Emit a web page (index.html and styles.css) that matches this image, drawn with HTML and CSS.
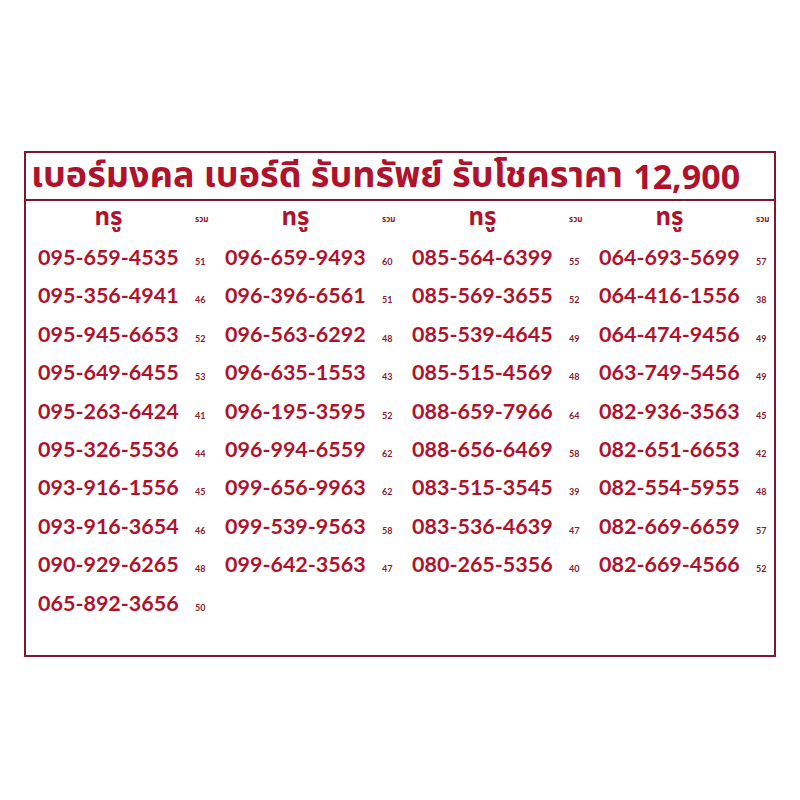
FILE: index.html
```html
<!DOCTYPE html>
<html lang="th">
<head>
<meta charset="utf-8">
<title>เบอร์มงคล</title>
<link rel="stylesheet" href="styles.css">
</head>
<body>
<div class="board">
  <div class="title">เบอร์มงคล เบอร์ดี รับทรัพย์ รับโชคราคา <span class="price">12,900</span></div>
  <div class="cols">
    <div class="col">
      <div class="head"><span class="net">ทรู</span><span class="sumlabel">รวม</span></div>
      <div class="row"><span class="num">095-659-4535</span><span class="sum">51</span></div>
      <div class="row"><span class="num">095-356-4941</span><span class="sum">46</span></div>
      <div class="row"><span class="num">095-945-6653</span><span class="sum">52</span></div>
      <div class="row"><span class="num">095-649-6455</span><span class="sum">53</span></div>
      <div class="row"><span class="num">095-263-6424</span><span class="sum">41</span></div>
      <div class="row"><span class="num">095-326-5536</span><span class="sum">44</span></div>
      <div class="row"><span class="num">093-916-1556</span><span class="sum">45</span></div>
      <div class="row"><span class="num">093-916-3654</span><span class="sum">46</span></div>
      <div class="row"><span class="num">090-929-6265</span><span class="sum">48</span></div>
      <div class="row"><span class="num">065-892-3656</span><span class="sum">50</span></div>
    </div>
    <div class="col">
      <div class="head"><span class="net">ทรู</span><span class="sumlabel">รวม</span></div>
      <div class="row"><span class="num">096-659-9493</span><span class="sum">60</span></div>
      <div class="row"><span class="num">096-396-6561</span><span class="sum">51</span></div>
      <div class="row"><span class="num">096-563-6292</span><span class="sum">48</span></div>
      <div class="row"><span class="num">096-635-1553</span><span class="sum">43</span></div>
      <div class="row"><span class="num">096-195-3595</span><span class="sum">52</span></div>
      <div class="row"><span class="num">096-994-6559</span><span class="sum">62</span></div>
      <div class="row"><span class="num">099-656-9963</span><span class="sum">62</span></div>
      <div class="row"><span class="num">099-539-9563</span><span class="sum">58</span></div>
      <div class="row"><span class="num">099-642-3563</span><span class="sum">47</span></div>
    </div>
    <div class="col">
      <div class="head"><span class="net">ทรู</span><span class="sumlabel">รวม</span></div>
      <div class="row"><span class="num">085-564-6399</span><span class="sum">55</span></div>
      <div class="row"><span class="num">085-569-3655</span><span class="sum">52</span></div>
      <div class="row"><span class="num">085-539-4645</span><span class="sum">49</span></div>
      <div class="row"><span class="num">085-515-4569</span><span class="sum">48</span></div>
      <div class="row"><span class="num">088-659-7966</span><span class="sum">64</span></div>
      <div class="row"><span class="num">088-656-6469</span><span class="sum">58</span></div>
      <div class="row"><span class="num">083-515-3545</span><span class="sum">39</span></div>
      <div class="row"><span class="num">083-536-4639</span><span class="sum">47</span></div>
      <div class="row"><span class="num">080-265-5356</span><span class="sum">40</span></div>
    </div>
    <div class="col">
      <div class="head"><span class="net">ทรู</span><span class="sumlabel">รวม</span></div>
      <div class="row"><span class="num">064-693-5699</span><span class="sum">57</span></div>
      <div class="row"><span class="num">064-416-1556</span><span class="sum">38</span></div>
      <div class="row"><span class="num">064-474-9456</span><span class="sum">49</span></div>
      <div class="row"><span class="num">063-749-5456</span><span class="sum">49</span></div>
      <div class="row"><span class="num">082-936-3563</span><span class="sum">45</span></div>
      <div class="row"><span class="num">082-651-6653</span><span class="sum">42</span></div>
      <div class="row"><span class="num">082-554-5955</span><span class="sum">48</span></div>
      <div class="row"><span class="num">082-669-6659</span><span class="sum">57</span></div>
      <div class="row"><span class="num">082-669-4566</span><span class="sum">52</span></div>
    </div>
  </div>
</div>
</body>
</html>
```
FILE: styles.css
```css
html, body {
  margin: 0;
  padding: 0;
  background: #ffffff;
}

body {
  width: 800px;
  height: 800px;
  padding-top: 151px;
  box-sizing: border-box;
  font-family: "Noto Sans Thai", "Noto Sans", "DejaVu Sans", sans-serif;
  color: #b0122c;
}

.board {
  margin-left: 24px;
  width: 752px;
  height: 506px;
  border: 2px solid #7a1a2c;
  box-sizing: border-box;
}

.title {
  height: 48px;
  border-bottom: 2px solid #7a1a2c;
  box-sizing: border-box;
  padding-left: 5px;
  display: flex;
  align-items: center;
  font-size: 36px;
  font-weight: 700;
  white-space: nowrap;
  line-height: 1;
}

.price {
  font-family: "Open Sans", sans-serif;
  font-size: 34px;
  margin-left: 0.3em;
}

.cols {
  display: grid;
  grid-template-columns: repeat(4, 187px);
}

.col {
  display: flex;
  flex-direction: column;
  padding-left: 12px;
}

.head {
  height: 37px;
  display: flex;
  align-items: center;
}

.net {
  width: 157px;
  padding-right: 16px;
  box-sizing: border-box;
  text-align: center;
  font-size: 24px;
  font-weight: 700;
  line-height: 1;
  margin-top: -3px;
}

.sumlabel {
  font-size: 8px;
  font-weight: 700;
  color: #8a1a2c;
}

.row {
  height: 38.4px;
  display: flex;
  align-items: baseline;
  line-height: 38.4px;
}

.num {
  width: 157px;
  flex: none;
  font-family: Lato, "Open Sans", sans-serif;
  font-weight: 700;
  font-size: 21.5px;
}

.sum {
  font-family: Lato, sans-serif;
  font-weight: 700;
  font-size: 9px;
  color: #8a1a2c;
}
```
